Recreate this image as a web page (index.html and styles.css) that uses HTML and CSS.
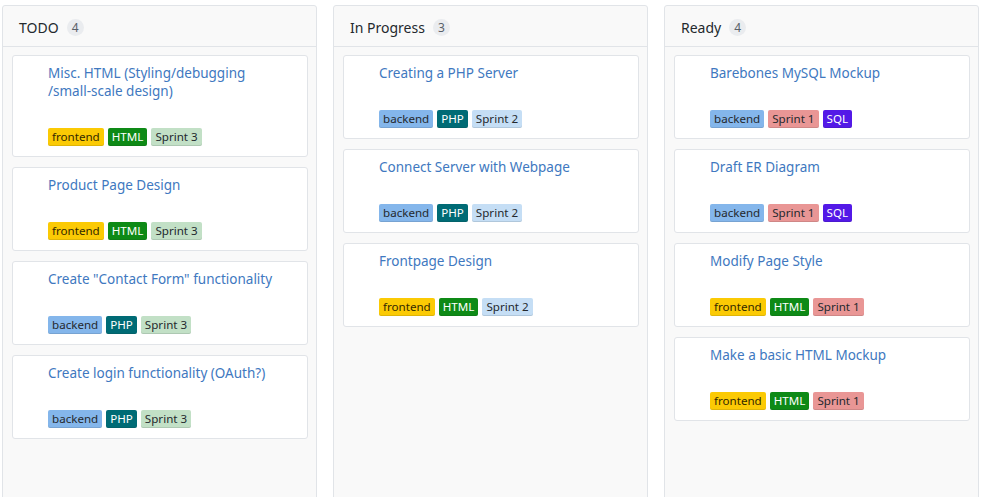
FILE: index.html
```html
<!DOCTYPE html>
<html>
<head>
<meta charset="utf-8">
<link rel="stylesheet" href="styles.css">
</head>
<body>
<div class="board">
  <section class="column">
    <header class="col-head"><span class="col-name">TODO</span><span class="count">4</span></header>
    <div class="cards">
      <article class="card">
        <div class="title">Misc. HTML (Styling/debugging<br>/small-scale design)</div>
        <div class="labels"><span class="label l-frontend">frontend</span><span class="label l-html">HTML</span><span class="label l-s3">Sprint 3</span></div>
      </article>
      <article class="card">
        <div class="title">Product Page Design</div>
        <div class="labels"><span class="label l-frontend">frontend</span><span class="label l-html">HTML</span><span class="label l-s3">Sprint 3</span></div>
      </article>
      <article class="card">
        <div class="title">Create "Contact Form" functionality</div>
        <div class="labels"><span class="label l-backend">backend</span><span class="label l-php">PHP</span><span class="label l-s3">Sprint 3</span></div>
      </article>
      <article class="card">
        <div class="title">Create login functionality (OAuth?)</div>
        <div class="labels"><span class="label l-backend">backend</span><span class="label l-php">PHP</span><span class="label l-s3">Sprint 3</span></div>
      </article>
    </div>
  </section>
  <section class="column">
    <header class="col-head"><span class="col-name">In Progress</span><span class="count">3</span></header>
    <div class="cards">
      <article class="card">
        <div class="title">Creating a PHP Server</div>
        <div class="labels"><span class="label l-backend">backend</span><span class="label l-php">PHP</span><span class="label l-s2">Sprint 2</span></div>
      </article>
      <article class="card">
        <div class="title">Connect Server with Webpage</div>
        <div class="labels"><span class="label l-backend">backend</span><span class="label l-php">PHP</span><span class="label l-s2">Sprint 2</span></div>
      </article>
      <article class="card">
        <div class="title">Frontpage Design</div>
        <div class="labels"><span class="label l-frontend">frontend</span><span class="label l-html">HTML</span><span class="label l-s2">Sprint 2</span></div>
      </article>
    </div>
  </section>
  <section class="column">
    <header class="col-head"><span class="col-name">Ready</span><span class="count">4</span></header>
    <div class="cards">
      <article class="card">
        <div class="title">Barebones MySQL Mockup</div>
        <div class="labels"><span class="label l-backend">backend</span><span class="label l-s1">Sprint 1</span><span class="label l-sql">SQL</span></div>
      </article>
      <article class="card">
        <div class="title">Draft ER Diagram</div>
        <div class="labels"><span class="label l-backend">backend</span><span class="label l-s1">Sprint 1</span><span class="label l-sql">SQL</span></div>
      </article>
      <article class="card">
        <div class="title">Modify Page Style</div>
        <div class="labels"><span class="label l-frontend">frontend</span><span class="label l-html">HTML</span><span class="label l-s1">Sprint 1</span></div>
      </article>
      <article class="card">
        <div class="title">Make a basic HTML Mockup</div>
        <div class="labels"><span class="label l-frontend">frontend</span><span class="label l-html">HTML</span><span class="label l-s1">Sprint 1</span></div>
      </article>
    </div>
  </section>
</div>
</body>
</html>
```

FILE: styles.css
```css
html, body {
  margin: 0;
  padding: 0;
  background: #fff;
  height: 100%;
  overflow: hidden;
}
body {
  font-family: "Noto Sans", "Open Sans", sans-serif;
  font-size: 14px;
  color: #24292e;
}
.board {
  display: flex;
  gap: 16px;
  padding: 5px 0 0 2px;
  height: 600px;
  box-sizing: border-box;
  align-items: stretch;
}
.column {
  width: 315px;
  box-sizing: border-box;
  background: #f9f9f9;
  border: 1px solid #e1e4e8;
  border-radius: 3px;
  display: flex;
  flex-direction: column;
}
.col-head {
  height: 41px;
  box-sizing: border-box;
  border-bottom: 1px solid #e1e4e8;
  display: flex;
  align-items: center;
  padding: 3px 0 0 16px;
  gap: 8px;
}
.col-name {
  font-size: 14px;
  color: #24292e;
}
.count {
  display: inline-block;
  min-width: 17px;
  height: 17px;
  line-height: 17px;
  text-align: center;
  font-size: 12px;
  color: #586069;
  background: #eaecef;
  border-radius: 10px;
  box-sizing: border-box;
  padding: 0 5px;
}
.cards {
  padding: 8px 8px 0 9px;
  display: flex;
  flex-direction: column;
  gap: 10px;
}
.card {
  background: #fff;
  border: 1px solid #e1e4e8;
  border-radius: 3px;
  padding: 8px 8px 10px 35px;
}
.title {
  color: #4078c0;
  font-size: 13.5px;
  line-height: 18px;
}
.labels {
  margin-top: 28px;
  display: flex;
  gap: 4px;
}
.label {
  display: inline-block;
  height: 18px;
  line-height: 18px;
  font-size: 11.6px;
  padding: 0 4px;
  border-radius: 2px;
  color: #24292e;
  box-shadow: inset 0 -1px 0 rgba(27,31,35,0.12);
}
.l-frontend { background: #fbca04; color: #332900; }
.l-html { background: #0e8a16; color: #fff; }
.l-s3 { background: #c2e0c6; }
.l-s2 { background: #c5def5; }
.l-s1 { background: #e99695; }
.l-backend { background: #84b6eb; }
.l-php { background: #006b75; color: #fff; }
.l-sql { background: #5319e7; color: #fff; }
```
